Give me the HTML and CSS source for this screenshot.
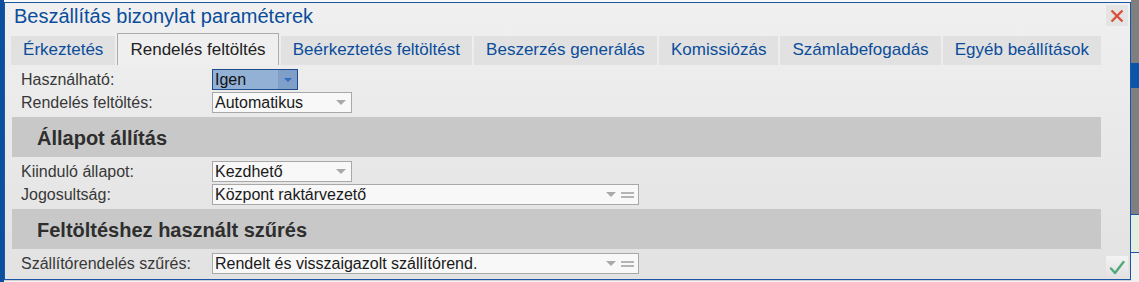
FILE: index.html
```html
<!DOCTYPE html>
<html lang="hu">
<head>
<meta charset="utf-8">
<title>Beszállítás bizonylat paraméterek</title>
<link rel="stylesheet" href="styles.css">
</head>
<body>
<div class="screen">
  <div class="left-strip"></div>
  <div class="dialog-col">
    <div class="top-edge"></div>
    <div class="dialog">
      <div class="title">Beszállítás bizonylat paraméterek</div>
      <button class="close-btn" aria-label="Bezárás">
        <svg width="14" height="14" viewBox="0 0 14 14"><path d="M1.5 1.5 L12.5 12.5 M12.5 1.5 L1.5 12.5" stroke="#d9503a" stroke-width="2.4" fill="none"/></svg>
      </button>
      <div class="tabs">
        <div class="tab">Érkeztetés</div>
        <div class="tab active">Rendelés feltöltés</div>
        <div class="tab">Beérkeztetés feltöltést</div>
        <div class="tab">Beszerzés generálás</div>
        <div class="tab">Komissiózás</div>
        <div class="tab">Számlabefogadás</div>
        <div class="tab">Egyéb beállítások</div>
      </div>
      <div class="panel">
        <div class="row">
          <span class="label">Használható:</span>
          <div class="select focused w-xs">
            <span class="value">Igen</span>
            <span class="arrow-box"><span class="tri tri-blue"></span></span>
          </div>
        </div>
        <div class="row">
          <span class="label">Rendelés feltöltés:</span>
          <div class="select w-sm">
            <span class="value">Automatikus</span>
            <span class="tri"></span>
          </div>
        </div>
        <div class="section">Állapot állítás</div>
        <div class="row">
          <span class="label">Kiinduló állapot:</span>
          <div class="select w-sm">
            <span class="value">Kezdhető</span>
            <span class="tri"></span>
          </div>
        </div>
        <div class="row">
          <span class="label">Jogosultság:</span>
          <div class="select w-lg">
            <span class="value">Központ raktárvezető</span>
            <span class="tri"></span>
            <span class="eq"></span>
          </div>
        </div>
        <div class="section">Feltöltéshez használt szűrés</div>
        <div class="row">
          <span class="label">Szállítórendelés szűrés:</span>
          <div class="select w-lg">
            <span class="value">Rendelt és visszaigazolt szállítórend.</span>
            <span class="tri"></span>
            <span class="eq"></span>
          </div>
        </div>
      </div>
      <button class="ok-btn" aria-label="OK">
        <svg width="16" height="16" viewBox="0 0 16 16"><path d="M2 9.5 L6 14 L14.5 3" stroke="#52a97a" stroke-width="2.4" fill="none" stroke-linecap="round" stroke-linejoin="round"/></svg>
      </button>
    </div>
    <div class="bottom-edge"></div>
  </div>
  <div class="right-strip">
    <div class="rs-gray top"></div>
    <div class="rs-blue"></div>
    <div class="rs-gray mid"></div>
    <div class="rs-green"></div>
    <div class="rs-light"></div>
  </div>
</div>
</body>
</html>
```

FILE: styles.css
```css
* { box-sizing: border-box; }
html, body { margin: 0; padding: 0; }
body {
  width: 1139px;
  height: 282px;
  overflow: hidden;
  font-family: "Liberation Sans", Arial, sans-serif;
  background: #f2f2f2;
}
.screen {
  display: flex;
  width: 1139px;
  height: 282px;
}
.left-strip {
  width: 4px;
  background: #0d4f9f;
  flex: none;
}
.dialog-col {
  width: 1127px;
  flex: none;
  display: flex;
  flex-direction: column;
}
.top-edge {
  height: 2px;
  background: #f7f7f7;
}
.bottom-edge {
  height: 2px;
  background: #f4f4f4;
  border-top: 1px solid #d0d0d0;
}
.dialog {
  position: relative;
  height: 278px;
  border: 1px solid #1b55a6;
  background: linear-gradient(#f0f0f0, #e2e2e2);
  padding: 0 29px 0 6px;
}
.title {
  height: 30px;
  line-height: 26px;
  padding-left: 3px;
  font-size: 20px;
  color: #0b4d9b;
  white-space: nowrap;
}
.close-btn {
  position: absolute;
  top: 2px;
  right: 2px;
  width: 22px;
  height: 21px;
  border: none;
  padding: 0;
  background: #e4e4e4;
  display: flex;
  align-items: center;
  justify-content: center;
}
.ok-btn {
  position: absolute;
  bottom: 2px;
  right: 2px;
  width: 22px;
  height: 21px;
  border: none;
  padding: 0;
  background: linear-gradient(#f3f3f3, #e2e2e2);
  display: flex;
  align-items: center;
  justify-content: center;
}
.tabs {
  display: flex;
  align-items: flex-end;
  gap: 2px;
  height: 32px;
}
.tab {
  flex: 1 1 auto;
  height: 29px;
  line-height: 27px;
  padding: 0 10px 2px;
  text-align: center;
  font-size: 17px;
  color: #0b4d9b;
  background: #e1e1e1;
  white-space: nowrap;
}
.tab.active {
  height: 32px;
  padding-top: 2px;
  color: #222;
  background: #efefef;
  border: 1px solid #ababab;
  border-bottom: none;
}
.panel {
  padding-top: 3px;
}
.row {
  display: flex;
  align-items: center;
  height: 23px;
}
.label {
  width: 201px;
  padding-left: 10px;
  font-size: 16px;
  line-height: 23px;
  color: #383838;
  white-space: nowrap;
}
.select {
  position: relative;
  display: flex;
  align-items: center;
  height: 21px;
  border: 1px solid #a8a8a8;
  background: #f8f8f8;
  padding-left: 2px;
  font-size: 16px;
  line-height: 19px;
  color: #1a1a1a;
}
.select .value {
  flex: 1;
  white-space: nowrap;
  overflow: hidden;
}
.w-xs { width: 86px; }
.w-sm { width: 140px; }
.w-lg { width: 427px; }
.tri {
  width: 0;
  height: 0;
  border-left: 5.5px solid transparent;
  border-right: 5.5px solid transparent;
  border-top: 5px solid #a9a9a9;
  margin-right: 5px;
  flex: none;
}
.eq {
  width: 13px;
  height: 6px;
  border-top: 2px solid #b4b4b4;
  border-bottom: 2px solid #b4b4b4;
  margin-right: 4px;
  flex: none;
}
.select.focused {
  border-color: #1c4b8e;
  background: #93b0d5;
  color: #111;
  padding-right: 0;
}
.arrow-box {
  width: 19px;
  align-self: stretch;
  background: #809fc8;
  display: flex;
  align-items: center;
  justify-content: center;
}
.tri-blue {
  border-left-width: 4.5px;
  border-right-width: 4.5px;
  border-top: 4px solid #2f6cc0;
  margin: 0;
}
.section {
  height: 40px;
  margin: 3px 0 3px 1px;
  padding: 2px 0 0 25px;
  line-height: 38px;
  background: #c8c8c8;
  font-size: 20px;
  font-weight: bold;
  color: #2e2e2e;
  white-space: nowrap;
}
.right-strip {
  width: 8px;
  flex: none;
  display: flex;
  flex-direction: column;
}
.rs-gray { background: #7f7f7f; }
.rs-gray.top { height: 63px; }
.rs-blue { height: 25px; background: #0a55a8; }
.rs-gray.mid { height: 127px; border-bottom: 1px solid #1b55a6; }
.rs-green { height: 38px; background: #e3efe0; border-bottom: 1px solid #1b55a6; }
.rs-light { flex: 1; background: #f0f0f0; }
```
